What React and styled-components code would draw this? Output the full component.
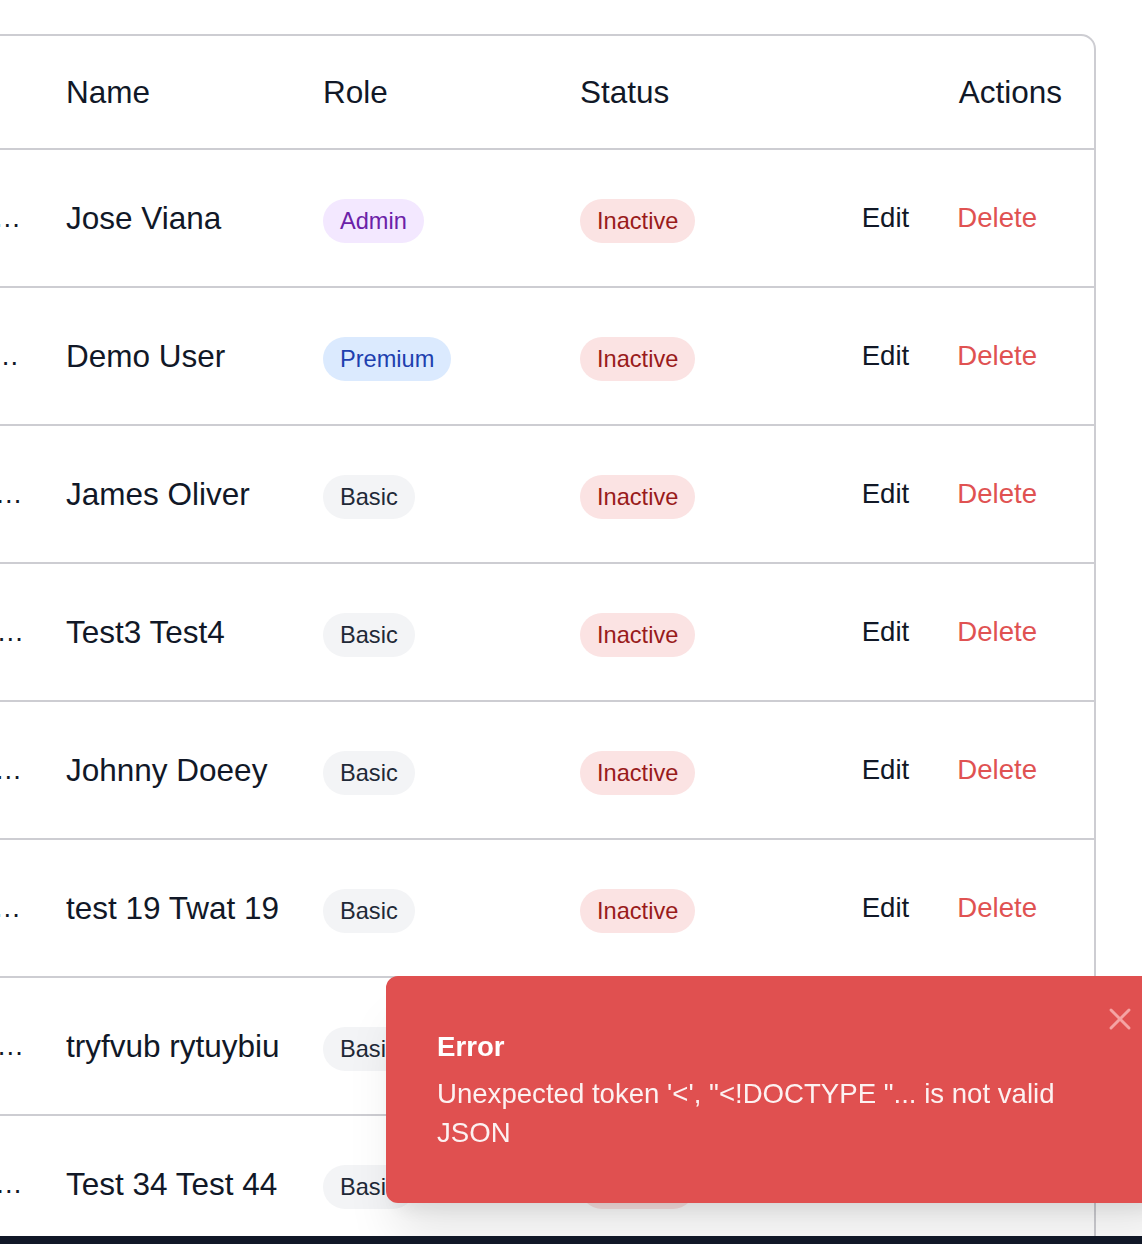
import React from 'react';
import styled, { createGlobalStyle } from 'styled-components';
import { X } from 'lucide-react';

const GlobalStyle = createGlobalStyle`
  html, body {
    margin: 0;
    padding: 0;
    background: #ffffff;
    overflow: hidden;
  }
  body {
    font-family: "Liberation Sans", Arial, sans-serif;
    color: #111827;
  }
`;

const Page = styled.div`
  padding-top: 34px;
  height: 1400px;
`;

const Card = styled.div`
  margin-left: -268px;
  width: 1364px;
  box-sizing: border-box;
  border: 2px solid #cdcdd2;
  border-radius: 15px;
  overflow: hidden;
`;

const Row = styled.div`
  display: grid;
  grid-template-columns: 300px 257px 257px 1fr auto;
  align-items: center;
  height: ${({ $head }) => ($head ? '112px' : '136px')};
  border-bottom: 2px solid #cdcdd2;
`;

const HeadCell = styled.div`
  font-size: 31.5px;
  color: #111827;
  padding: 0 32px;
  text-align: ${({ $right }) => ($right ? 'right' : 'left')};
`;

const EmailCell = styled.div`
  font-size: 27.6px;
  color: #111827;
  padding: 0 6px 0 32px;
  white-space: nowrap;
  overflow: hidden;
  text-overflow: ellipsis;
`;

const NameCell = styled.div`
  font-size: 31.5px;
  color: #111827;
  padding: 0 32px;
  white-space: nowrap;
`;

const Cell = styled.div`
  padding: 0 32px;
  display: flex;
  align-items: center;
`;

const badgeColors = {
  Admin: ['#f3e8ff', '#6b21a8'],
  Premium: ['#dbeafe', '#1e40af'],
  Basic: ['#f3f4f6', '#1f2937'],
  Inactive: ['#fbe3e3', '#991b1b'],
};

const Badge = styled.span`
  display: inline-block;
  height: 44px;
  line-height: 44px;
  padding: 0 17px;
  border-radius: 22px;
  font-size: 23.6px;
  margin-top: 5px;
  background: ${({ $kind }) => badgeColors[$kind][0]};
  color: ${({ $kind }) => badgeColors[$kind][1]};
`;

const Actions = styled.div`
  display: flex;
  justify-content: flex-end;
  padding-right: 33px;
`;

const ActionButton = styled.button`
  border: none;
  background: none;
  font-family: inherit;
  font-size: 27.6px;
  padding: 0 24px;
  cursor: pointer;
  color: ${({ $danger }) => ($danger ? '#e05252' : '#111827')};
`;

const Toast = styled.div`
  position: fixed;
  left: 386px;
  top: 976px;
  width: 795px;
  height: 227px;
  box-sizing: border-box;
  border: 2px solid #e05050;
  border-radius: 12px;
  background: #e05050;
  color: #ffffff;
  padding: 0 63px 0 49px;
  display: flex;
  flex-direction: column;
  justify-content: center;
  box-shadow: 0 40px 50px -10px rgba(0, 0, 0, 0.1), 0 16px 20px -12px rgba(0, 0, 0, 0.1);
`;

const ToastTitle = styled.div`
  font-size: 27.6px;
  line-height: 39px;
  font-weight: 700;
`;

const ToastText = styled.div`
  font-size: 27.6px;
  line-height: 39px;
  margin-top: 8px;
  opacity: 0.92;
`;

const CloseButton = styled.button`
  position: absolute;
  top: 23px;
  right: 41px;
  width: 36px;
  height: 36px;
  padding: 0;
  border: none;
  background: none;
  color: #f5a3a3;
  display: flex;
  align-items: center;
  justify-content: center;
`;

const BottomBar = styled.div`
  position: fixed;
  left: 0;
  right: 0;
  bottom: 0;
  height: 8px;
  background: #111827;
`;

const users = [
  { email: 'jose.viana@outlook.com', name: 'Jose Viana', role: 'Admin' },
  { email: 'demo.user@example.com', name: 'Demo User', role: 'Premium' },
  { email: 'james.oliver@gmail.com', name: 'James Oliver', role: 'Basic' },
  { email: 'test3test4@hotmail.com', name: 'Test3 Test4', role: 'Basic' },
  { email: 'johnny.doeey@gmail.com', name: 'Johnny Doeey', role: 'Basic' },
  { email: 'test19twat@gmail.com', name: 'test 19 Twat 19', role: 'Basic' },
  { email: 'tryfvubrytuy@gmail.com', name: 'tryfvub rytuybiu', role: 'Basic' },
  { email: 'test34test44@mail.com', name: 'Test 34 Test 44', role: 'Basic' },
];

export default function App() {
  return (
    <Page>
      <GlobalStyle />
      <Card>
        <Row $head>
          <HeadCell>Email</HeadCell>
          <HeadCell>Name</HeadCell>
          <HeadCell>Role</HeadCell>
          <HeadCell>Status</HeadCell>
          <HeadCell $right>Actions</HeadCell>
        </Row>
        {users.map((u) => (
          <Row key={u.name}>
            <EmailCell>{u.email}</EmailCell>
            <NameCell>{u.name}</NameCell>
            <Cell>
              <Badge $kind={u.role}>{u.role}</Badge>
            </Cell>
            <Cell>
              <Badge $kind="Inactive">Inactive</Badge>
            </Cell>
            <Actions>
              <ActionButton>Edit</ActionButton>
              <ActionButton $danger>Delete</ActionButton>
            </Actions>
          </Row>
        ))}
      </Card>
      <Toast>
        <ToastTitle>Error</ToastTitle>
        <ToastText>Unexpected token '&lt;', "&lt;!DOCTYPE "... is not valid JSON</ToastText>
        <CloseButton>
          <X size={36} strokeWidth={2} />
        </CloseButton>
      </Toast>
      <BottomBar />
    </Page>
  );
}
